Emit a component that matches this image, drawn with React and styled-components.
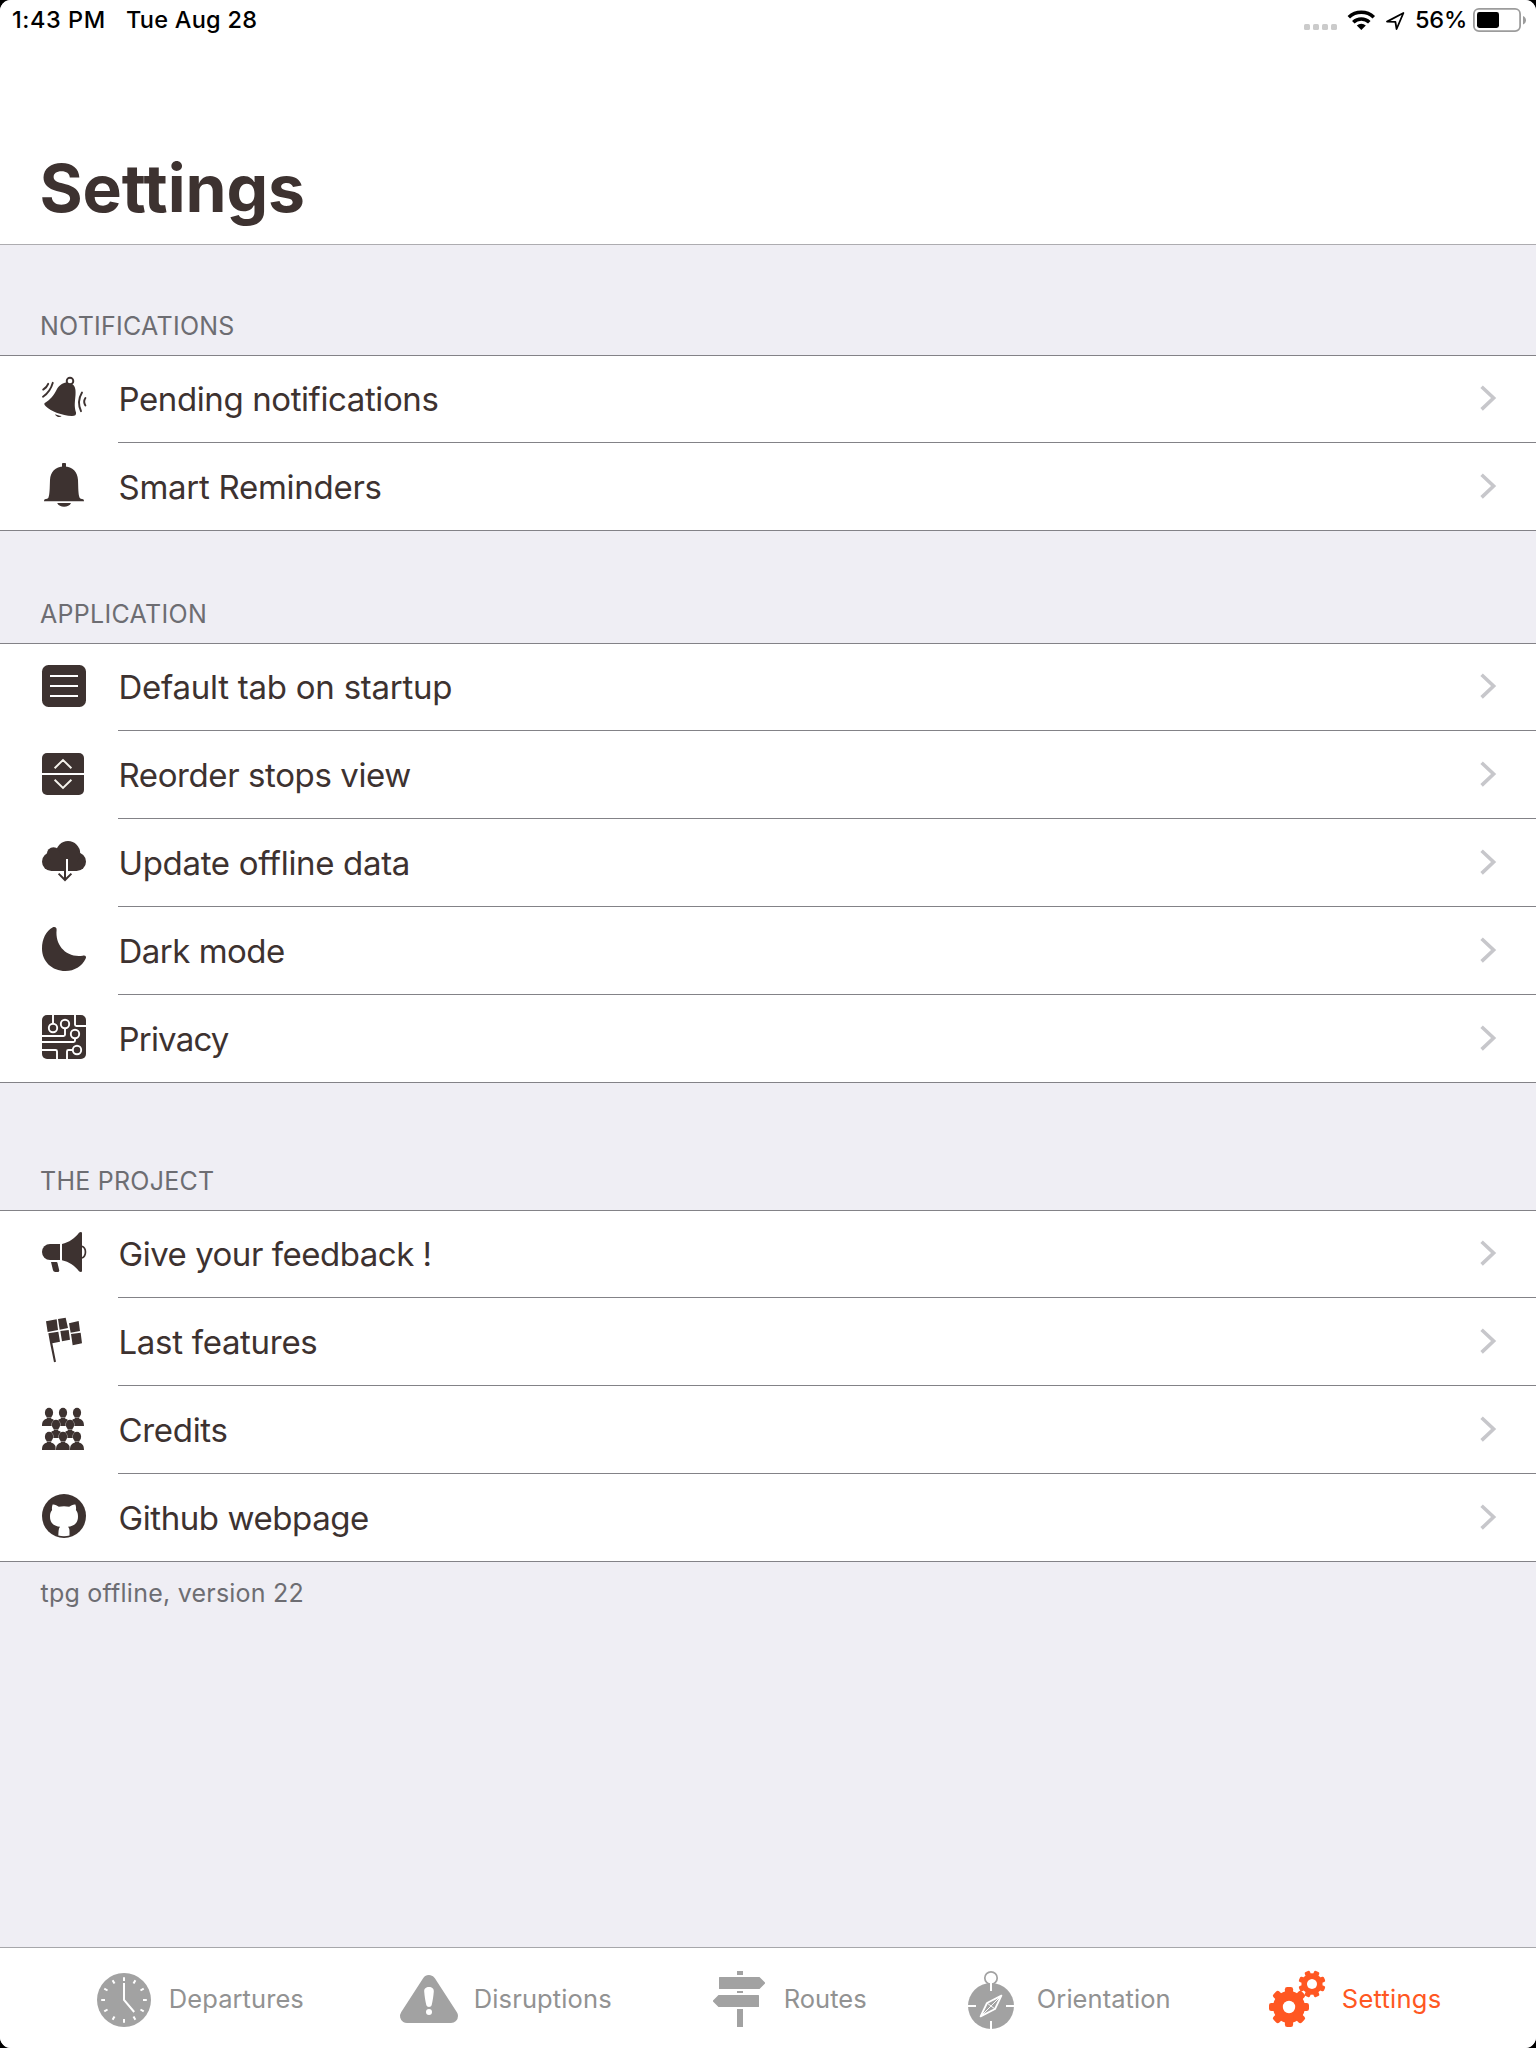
import React from "react";
import styled, { createGlobalStyle } from "styled-components";

const INK = "#3d3230";
const LINE = "#838287";

const GlobalStyle = createGlobalStyle`
  html, body { margin: 0; padding: 0; background: #000; }
  * { box-sizing: border-box; }
`;

const Screen = styled.div`
  width: 1536px;
  height: 2048px;
  display: flex;
  flex-direction: column;
  overflow: hidden;
  border-radius: 11px;
  background: #efeef4;
  color: ${INK};
  font-family: Inter, "Liberation Sans", sans-serif;
`;

const NavBar = styled.header`
  height: 245px;
  flex: none;
  display: flex;
  flex-direction: column;
  justify-content: space-between;
  background: #fff;
  border-bottom: 1px solid #adacb0;
`;

const StatusBar = styled.div`
  display: flex;
  justify-content: space-between;
  height: 40px;
  padding: 0 9px 0 12px;
  color: #000;
  font-size: 23.5px;
  font-weight: 500;
  line-height: 39px;
  white-space: nowrap;
`;

const StatusGroup = styled.div`
  display: flex;
`;

const StatusText = styled.span`
  width: ${(p) => p.$width}px;
  letter-spacing: ${(p) => p.$tracking}px;
`;

const Title = styled.h1`
  margin: 0;
  padding: 0 0 16px 39.5px;
  font-size: 66px;
  font-weight: 700;
  line-height: 80px;
  letter-spacing: -0.1px;
`;

const Content = styled.main`
  flex: 1;
`;

const SectionTitle = styled.h2`
  display: flex;
  align-items: flex-end;
  height: ${(p) => p.$height}px;
  margin: 0;
  padding: 0 0 14px 40px;
  color: #6d6d72;
  font-size: 25px;
  font-weight: 400;
  line-height: 30px;
  letter-spacing: ${(p) => p.$tracking}px;
`;

const Footer = styled.p`
  margin: 0;
  padding: 16px 0 0 40.6px;
  color: #6d6d72;
  font-size: 25px;
  line-height: 30px;
  letter-spacing: 0.23px;
`;

const Group = styled.div`
  background: #fff;
  box-shadow: inset 0 1px 0 ${LINE};
  border-bottom: 1px solid ${LINE};
`;

const Row = styled.div`
  display: flex;
  height: 88px;
  padding-left: 40px;
  &:last-child { height: 87px; }
  &:last-child > div { border-bottom: 0; }
`;

const RowIcon = styled.svg`
  flex: none;
  width: 48px;
  height: 48px;
  margin: 20px 30px 0 0;
  overflow: visible;
  fill: ${INK};
`;

const RowBody = styled.div`
  flex: 1;
  display: flex;
  justify-content: space-between;
  padding-right: 39px;
  border-bottom: 1px solid ${LINE};
`;

const RowLabel = styled.span`
  height: 87px;
  padding-left: 0.5px;
  font-size: 33px;
  line-height: 88px;
  letter-spacing: ${(p) => p.$tracking}px;
  white-space: nowrap;
`;

const Disclosure = styled.svg`
  width: 18px;
  height: 30px;
  margin-top: 28px;
  fill: none;
  stroke: #c7c7cb;
  stroke-width: 3.6;
`;

const TabBar = styled.nav`
  flex: none;
  display: grid;
  grid-template-columns: 305px 310px 253px 305px 1fr;
  height: 101px;
  padding: 22px 0 0 94px;
  background: #fff;
  border-top: 1px solid #a7a7aa;
`;

const Tab = styled.div`
  display: flex;
  gap: 14.8px;
  color: ${(p) => (p.$active ? "#ff5722" : "#929292")};
  font-size: 25.5px;
  line-height: 58px;
  letter-spacing: ${(p) => p.$tracking}px;
  white-space: nowrap;
`;

const TabIcon = styled.svg`
  flex: none;
  width: 60px;
  height: 60px;
  overflow: visible;
  fill: ${(p) => (p.$active ? "#ff5722" : "#a2a2a2")};
`;

const RingingBell = () => (
  <>
    <path d="M4.8 28C10 24.5 13.5 21.5 17 14C20 9 25 6.5 30 8C35 9.5 36 14 35.5 20C35 27 34 31 36 37.5C36.5 40 35 41 32 41C22 40.5 11 36.5 6 31.5C4 29.5 4 28.6 4.8 28Z" />
    <path d="M15 39.2C17 40 19 40.8 21.6 41C20 43 16.2 42 15 39.2Z" />
    <g fill="none" stroke={INK} strokeWidth="1.9" strokeLinecap="round">
      <circle cx="30" cy="6" r="3.3" fill="#fff" />
      <path d="M3.2 14.6Q6.8 12.4 8.2 8.8M3 21.8Q10.2 17 12.8 7.8" />
      <path d="M42 17.6Q36.6 26.7 41 36.2M45.4 23Q43 26.7 45.4 30.5" />
    </g>
  </>
);

const Bell = () => (
  <>
    <rect x="22" y="0" width="4" height="6" rx="0.8" />
    <path d="M24 3.5C15 3.5 10.5 9 10 17C9.7 25 9.8 31 8.5 34.5C8 35.8 6.5 36 4.8 36.2Q4 36.5 4 38.2H44Q44 36.5 43.2 36.2C41.5 36 40 35.8 39.5 34.5C38.2 31 38.3 25 38 17C37.5 9 33 3.5 24 3.5Z" />
    <path d="M17.2 40H31C29 45 19.2 45 17.2 40Z" />
  </>
);

const ListIcon = () => (
  <>
    <rect x="2" y="2" width="44" height="42" rx="6.5" />
    <path d="M10 13H38M10 23H38M10 33H38" stroke="#fff" strokeWidth="2" />
  </>
);

const Reorder = () => (
  <>
    <rect x="2" y="2" width="42" height="42" rx="5" />
    <path d="M2 23H44" stroke="#fff" strokeWidth="2" />
    <path d="M14.6 17.2L23 9L31.4 17.2M14.6 28.8L23 37L31.4 28.8" fill="none" stroke="#f5f3ec" strokeWidth="1.9" />
  </>
);

const CloudDownload = () => (
  <>
    <circle cx="11.4" cy="22.7" r="9.4" />
    <circle cx="36.6" cy="22.7" r="9.4" />
    <circle cx="28" cy="14.3" r="12.2" />
    <circle cx="13.5" cy="15" r="6.8" />
    <rect x="11" y="16" width="26" height="16" />
    <path d="M27 20V32" stroke="#fff" strokeWidth="2" />
    <path d="M25 32V41M18.6 34.6L25 41L31.4 34.6" fill="none" stroke={INK} strokeWidth="2" />
  </>
);

const Moon = () => (
  <path d="M12.5 .4C14.6 -.7 17 .2 16.6 3C15 18 26 31 42.6 28.7C45.5 28 46.8 29.4 45.6 31.8C41.8 39.5 34.5 44 25.5 44C12 44 2 34.5 2 21.5C2 12 6 4 12.5 .4Z" />
);

const Circuit = () => (
  <>
    <rect x="2" y="0" width="44" height="44" rx="5" />
    <g fill="none" stroke="#fff" strokeWidth="1.9">
      <circle cx="13" cy="13" r="4.2" />
      <circle cx="25" cy="9" r="4.2" />
      <circle cx="35" cy="19" r="4.2" />
      <circle cx="37" cy="35" r="4.2" />
      <path d="M13 0V9M25 13V19.5Q25 21 23.5 21H2M35 23V25.5Q35 27 33.5 27H2M35 0V9.5Q35 11 36.5 11H46" />
      <path d="M2 35H15.5Q17 35 17 36.5V44M33 35H28.5Q27 35 27 36.5V44" />
    </g>
  </>
);

const Megaphone = () => (
  <>
    <path d="M20 14V30H10A8 8 0 0 1 10 14Z" />
    <path d="M22 14C29 12.6 35 8 39 2.8Q40.5 1.4 42 2.4V41.6Q40.5 42.6 39 41.2C35 36 29 31.6 22 30.2Z" />
    <path d="M11 32H16.5Q17.3 32 17.5 33L19.3 40.4Q19.3 42 17.6 42H15.3Q13.5 42 13 40.3Z" />
    <path d="M42 16.2C46.6 18 46.6 26 42 28" fill="none" stroke={INK} strokeWidth="1.7" />
  </>
);

const CheckeredFlag = () => (
  <g transform="translate(-20 -118) scale(0.33333)">
    <path d="M78 364L110 358L114 390L83 396ZM114 357L137 353L144 384L119 389ZM147 370L176 363L180 393L152 398ZM85 400L115 395L120 425L97 430L108 485L102 487L90 428ZM121 393L146 390L150 419L126 424ZM153 402L182 398L186 430L158 436Z" />
  </g>
);

const Person = ({ x, y }) => (
  <g transform={`translate(${x} ${y})`} stroke="#fff" strokeWidth="0.7" paintOrder="stroke">
    <path d="M-7 13.4C-7 8.5 -5.4 6.8 -2.2 6V3H2.2V6C5.4 6.8 7 8.5 7 13.4Z" />
    <ellipse cx="0" cy="0" rx="4.1" ry="4.9" />
  </g>
);

const Crowd = () => (
  <>
    {[9, 23, 37].map((x) => <Person key={`a${x}`} x={x} y={6.7} />)}
    {[16, 30].map((x) => <Person key={`b${x}`} x={x} y={18.7} />)}
    {[9, 23, 37].map((x) => <Person key={`c${x}`} x={x} y={30.7} />)}
  </>
);

const Github = () => (
  <>
    <circle cx="24" cy="22" r="22" />
    <path
      fill="#fff"
      d="M12.6 10.6C14.5 10.2 17 11.5 18.8 12.8Q24 11.7 29.2 12.8C31 11.5 33.5 10.2 35.4 10.6C36.2 13 36.2 14.5 35.9 16C37.5 18 38 20 38 22.5C38 29.5 34 32 28 32.8C29.2 34 29.5 35.3 29.5 37V41.6C26 42.4 22 42.4 18.3 41.6C18.6 38 18.2 35 20 32.8C14 32 10 29.5 10 22.5C10 20 10.5 18 12.1 16C11.8 14.5 11.8 13 12.6 10.6Z"
    />
  </>
);

const Clock = () => (
  <>
    <circle cx="30" cy="30" r="27" />
    <g stroke="#fff" strokeWidth="2" fill="none">
      {Array.from({ length: 12 }, (_, i) => (
        <path key={i} d="M30 7.2V11" transform={`rotate(${i * 30} 30 30)`} />
      ))}
      <path d="M30 13V30L40.2 42" />
    </g>
  </>
);

const Warning = () => (
  <>
    <path d="M30 12L8 46H52Z" stroke="#a2a2a2" strokeWidth="14" strokeLinejoin="round" />
    <path fill="#fff" d="M30 17C33 17 35 18.6 34.8 21.5C34.4 27 33.6 31 32.7 35C32.2 37.6 27.8 37.6 27.3 35C26.4 31 25.6 27 25.2 21.5C25 18.6 27 17 30 17Z" />
    <circle fill="#fff" cx="30" cy="42" r="3" />
  </>
);

const Signpost = () => (
  <path
    transform="translate(2 0)"
    d="M26 1H32V5H26ZM8.6 7H48.5L54 12.4V13.6L48.5 19H8.6Q8 19 8 18.4V7.6Q8 7 8.6 7ZM26 21H32V23H26ZM7.5 25H47.4Q48 25 48 25.6V36.4Q48 37 47.4 37H7.5L2 31.6V30.4ZM26 39H32V57H26Z"
  />
);

const Compass = () => (
  <g transform="translate(1 0)">
    <circle cx="28" cy="36" r="23" />
    <circle cx="28" cy="8" r="6.2" fill="#fff" stroke="#a2a2a2" strokeWidth="1.7" />
    <g stroke="#fff" strokeWidth="2" fill="none">
      <path d="M28 12.5V21M28 51V60M4 36H13M43 36H52" />
      <path d="M38.4 25.6L24 33L17.6 46.4L32 39Z" strokeWidth="1.8" strokeLinejoin="round" />
      <path d="M24 33L32 39M38.4 25.6L17.6 46.4" strokeWidth="1" />
    </g>
  </g>
);

const Gear = ({ x, y, body, tip, width, hole, turn }) => (
  <g transform={`translate(${x} ${y}) rotate(${turn})`}>
    <circle r={body} />
    {Array.from({ length: 8 }, (_, i) => (
      <rect key={i} x={-width / 2} y={-tip} width={width} height={tip} rx={width / 3.6} transform={`rotate(${i * 45})`} />
    ))}
    <circle r={hole} fill="#fff" />
  </g>
);

const Gears = () => (
  <>
    <Gear x={22} y={37} body={16} tip={20} width={8.2} hole={6.2} turn={0} />
    <Gear x={45} y={14} body={10.6} tip={13.6} width={5.6} hole={5} turn={22.5} />
  </>
);

const sections = [
  {
    title: "NOTIFICATIONS",
    height: 110,
    tracking: 0.26,
    rows: [
      ["Pending notifications", RingingBell, -0.4],
      ["Smart Reminders", Bell, -0.27],
    ],
  },
  {
    title: "APPLICATION",
    height: 112,
    tracking: 0.3,
    rows: [
      ["Default tab on startup", ListIcon, -0.25],
      ["Reorder stops view", Reorder, -0.4],
      ["Update offline data", CloudDownload, -0.32],
      ["Dark mode", Moon, -0.5],
      ["Privacy", Circuit, -0.8],
    ],
  },
  {
    title: "THE PROJECT",
    height: 127,
    tracking: 0.24,
    rows: [
      ["Give your feedback !", Megaphone, -0.48],
      ["Last features", CheckeredFlag, -0.3],
      ["Credits", Crowd, -0.32],
      ["Github webpage", Github, -0.42],
    ],
  },
];

const tabs = [
  ["Departures", Clock, 0.07],
  ["Disruptions", Warning, 0.12],
  ["Routes", Signpost, 0],
  ["Orientation", Compass, 0.05],
  ["Settings", Gears, 0.25],
];

const StatusIcons = () => (
  <svg width="112" height="40" viewBox="1303 0 112 40">
    <g fill="#cbcbcb">
      {[1304, 1313, 1322, 1331].map((x) => <rect key={x} x={x} y="24" width="6" height="6" rx="1.6" />)}
    </g>
    <g fill="none" stroke="#000" strokeWidth="3.6">
      <path d="M1348.8 17.2A18.2 18.2 0 0 1 1373.8 17.2" />
      <path d="M1353.3 22.2A11.6 11.6 0 0 1 1369.3 22.2" />
    </g>
    <path d="M1361.3 30L1356.8 25.6A6.6 6.6 0 0 1 1365.8 25.6Z" />
    <path d="M1403.4 13L1387 21.6L1395.4 21.9L1396.6 29Z" fill="none" stroke="#000" strokeWidth="1.8" strokeLinejoin="round" />
  </svg>
);

const Battery = () => (
  <svg width="55" height="40" viewBox="1472 0 55 40">
    <rect x="1473.9" y="8.9" width="46.2" height="22.2" rx="5" fill="none" stroke="#9c9c9c" strokeWidth="1.8" />
    <rect x="1477" y="12" width="22" height="16" rx="2.4" />
    <path d="M1523 16C1527 17.4 1527 23 1523 24.4Z" fill="#9c9c9c" />
  </svg>
);

export default function App() {
  return (
    <>
      <GlobalStyle />
      <Screen>
        <NavBar>
          <StatusBar>
            <StatusGroup>
              <StatusText $width={114} $tracking={0.55}>1:43 PM</StatusText>
              <StatusText $width={140} $tracking={0.25}>Tue Aug 28</StatusText>
            </StatusGroup>
            <StatusGroup>
              <StatusIcons />
              <StatusText $width={57} $tracking={-0.2}>56%</StatusText>
              <Battery />
            </StatusGroup>
          </StatusBar>
          <Title>Settings</Title>
        </NavBar>
        <Content>
          {sections.map((section) => (
            <section key={section.title}>
              <SectionTitle $height={section.height} $tracking={section.tracking}>{section.title}</SectionTitle>
              <Group>
                {section.rows.map(([label, Icon, tracking]) => (
                  <Row key={label}>
                    <RowIcon viewBox="0 0 48 48"><Icon /></RowIcon>
                    <RowBody>
                      <RowLabel $tracking={tracking}>{label}</RowLabel>
                      <Disclosure viewBox="0 0 18 30"><path d="M2.6 3.8L14.6 15L2.6 26.4" /></Disclosure>
                    </RowBody>
                  </Row>
                ))}
              </Group>
            </section>
          ))}
          <Footer>tpg offline, version 22</Footer>
        </Content>
        <TabBar>
          {tabs.map(([label, Icon, tracking]) => (
            <Tab key={label} $active={label === "Settings"} $tracking={tracking}>
              <TabIcon viewBox="0 0 60 60" $active={label === "Settings"}><Icon /></TabIcon>
              {label}
            </Tab>
          ))}
        </TabBar>
      </Screen>
    </>
  );
}
